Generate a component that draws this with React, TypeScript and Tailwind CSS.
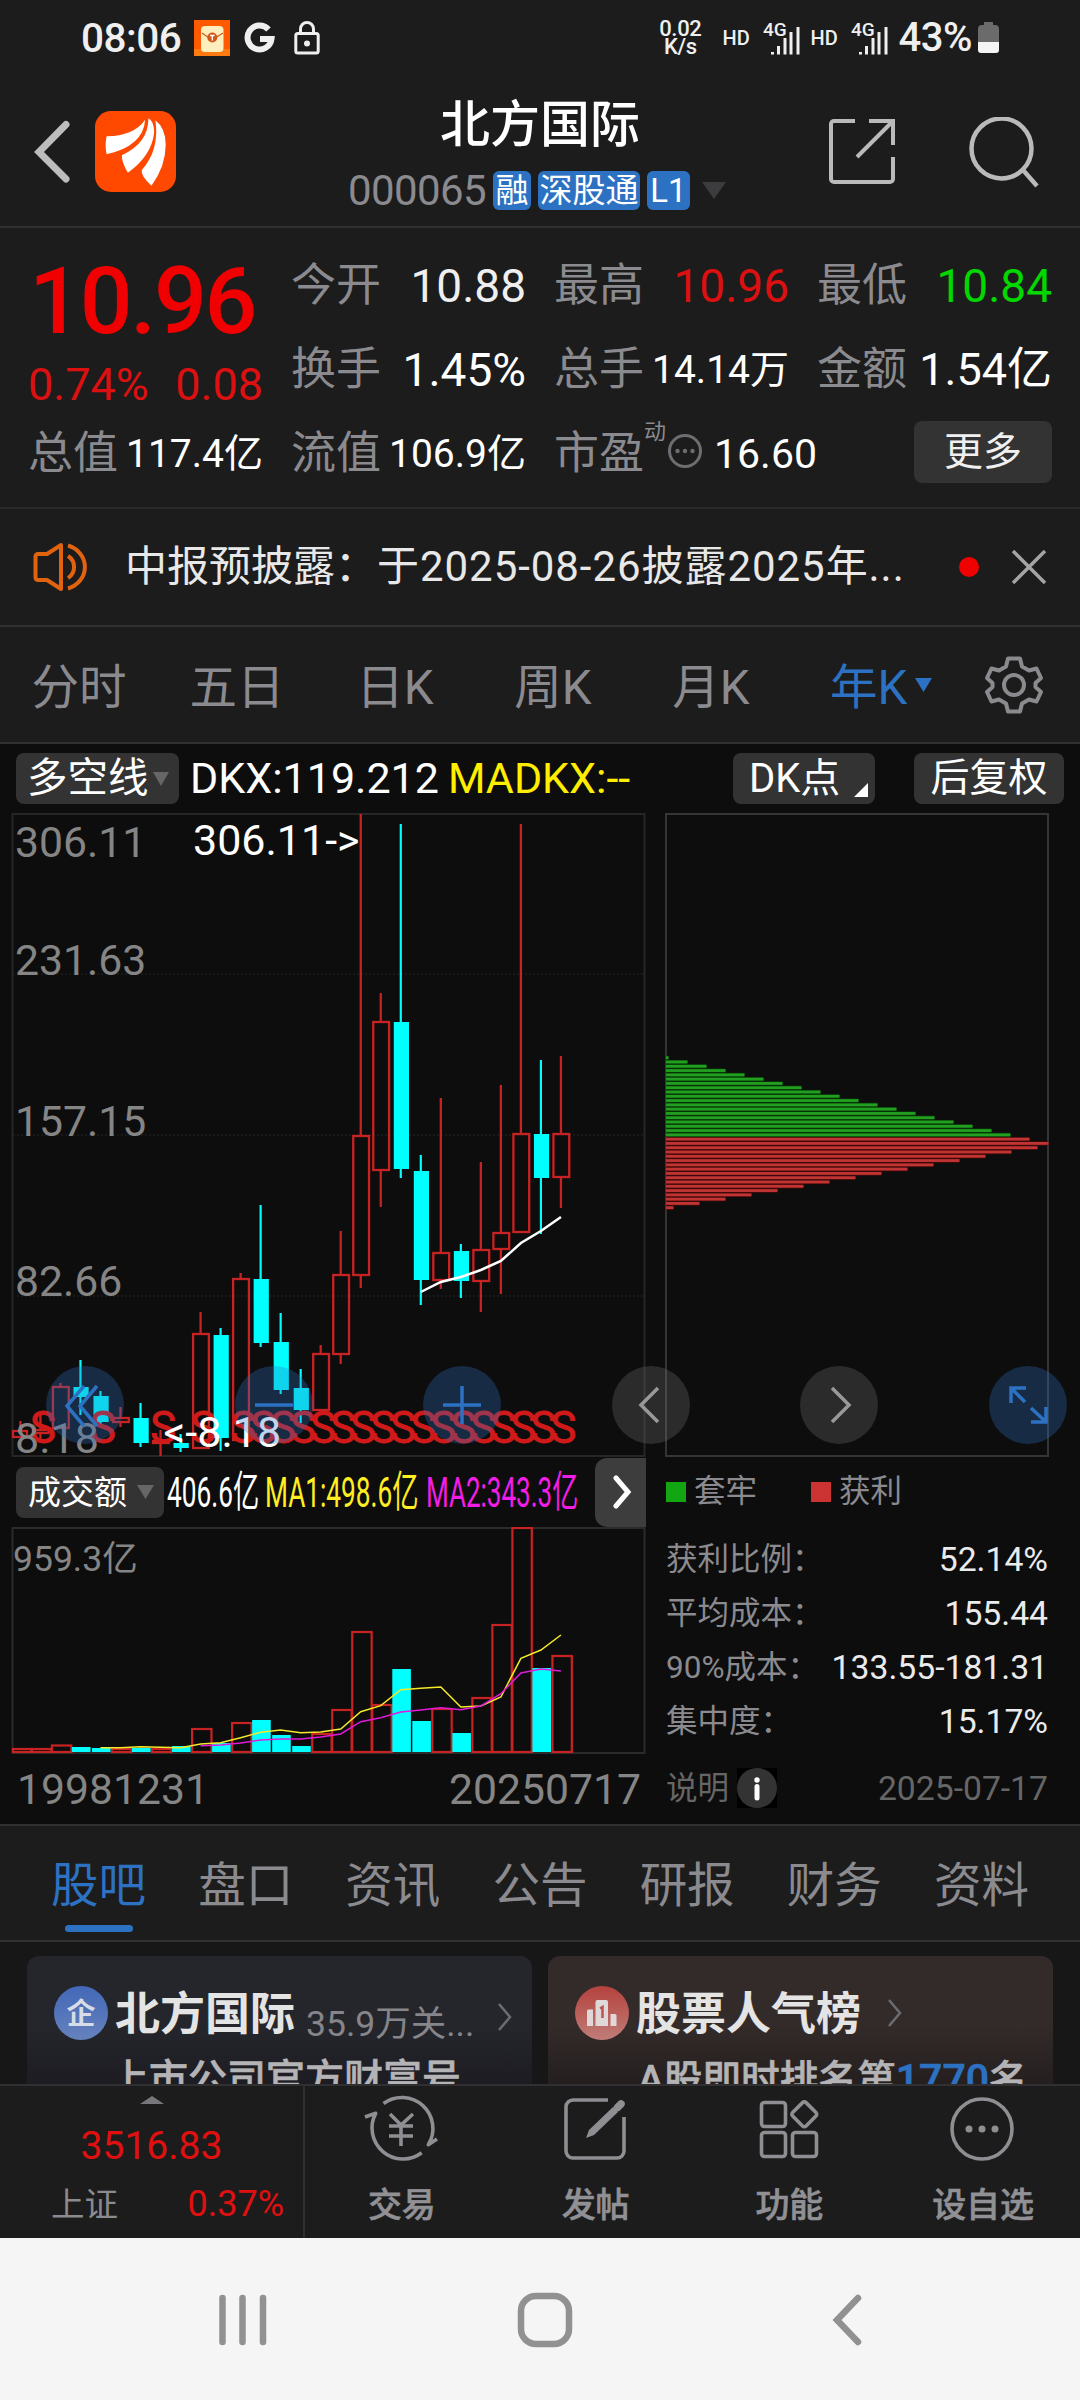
import React from "react";

type Candle = { up: boolean; high: number; top: number; bottom: number; low: number };

const RED = "#c82222";
const CYAN = "#00ffff";
const xAt = (i: number) => 20.4 + 20.02 * i;

const candles: Candle[] = [
  { up: true, high: 1421, top: 1431, bottom: 1437, low: 1437 },
  { up: true, high: 1415, top: 1430, bottom: 1433, low: 1440 },
  { up: true, high: 1383, top: 1387, bottom: 1428, low: 1428 },
  { up: false, high: 1360, top: 1387, bottom: 1397, low: 1415 },
  { up: false, high: 1391, top: 1396, bottom: 1422, low: 1424 },
  { up: true, high: 1407, top: 1418, bottom: 1422, low: 1427 },
  { up: false, high: 1403, top: 1418, bottom: 1443, low: 1447 },
  { up: true, high: 1430, top: 1441, bottom: 1443, low: 1456 },
  { up: false, high: 1434, top: 1443, bottom: 1448, low: 1452 },
  { up: true, high: 1312, top: 1334, bottom: 1448, low: 1448 },
  { up: false, high: 1328, top: 1335, bottom: 1438, low: 1451 },
  { up: true, high: 1273, top: 1279, bottom: 1440, low: 1440 },
  { up: false, high: 1205, top: 1279, bottom: 1343, low: 1347 },
  { up: false, high: 1313, top: 1342, bottom: 1390, low: 1394 },
  { up: false, high: 1369, top: 1388, bottom: 1410, low: 1423 },
  { up: true, high: 1345, top: 1354, bottom: 1410, low: 1410 },
  { up: true, high: 1231, top: 1275, bottom: 1354, low: 1364 },
  { up: true, high: 814, top: 1136, bottom: 1275, low: 1288 },
  { up: true, high: 993, top: 1022, bottom: 1170, low: 1207 },
  { up: false, high: 824, top: 1022, bottom: 1169, low: 1178 },
  { up: false, high: 1155, top: 1171, bottom: 1280, low: 1305 },
  { up: true, high: 1098, top: 1253, bottom: 1280, low: 1289 },
  { up: false, high: 1244, top: 1251, bottom: 1281, low: 1298 },
  { up: true, high: 1162, top: 1250, bottom: 1281, low: 1312 },
  { up: true, high: 1085, top: 1233, bottom: 1249, low: 1294 },
  { up: true, high: 824, top: 1134, bottom: 1232, low: 1232 },
  { up: false, high: 1060, top: 1134, bottom: 1178, low: 1234 },
  { up: true, high: 1056, top: 1134, bottom: 1177, low: 1208 },
];

const signals = [1, 4, 7, 9, 11, 12, 13, 14, 15, 16, 17, 18, 19, 20, 21, 22, 23, 24, 25, 26, 27];
const dkx = [1292, 1282, 1277, 1270, 1261, 1243, 1231, 1217];

const volumeTops = [
  1749, 1749, 1745.5, 1747, 1748, 1749, 1748, 1749, 1746, 1729, 1743, 1723, 1720, 1735, 1746, 1734, 1710, 1632, 1705,
  1669, 1721, 1709, 1733, 1698, 1625, 1528, 1668, 1656,
];
const ma1 = [
  893, 893, 890, 892, 893, 882, 878, 863, 847, 840, 848, 846, 837, 785, 767, 719, 715, 711, 771, 768, 741, 625, 600, 555,
];
const ma2 = [887, 885, 879, 870, 867, 867, 861, 852, 815, 803, 786, 780, 773, 779, 768, 731, 669, 657, 663];

const line = (ys: number[], start: number) => ys.map((y, k) => `${xAt(start + k)},${y}`).join(" ");

function StatusBar() {
  return (
    <div className="flex h-[76px] items-center pl-[81px] pr-[81px] text-[#efefef]">
      <span className="w-[113px] text-[40.500px] font-medium leading-[74px] tracking-[-0.5px]">08:06</span>
      <svg width="36" height="36" viewBox="0 0 36 36">
        <rect width="36" height="36" fill="#ff5a00" />
        <rect y="29" width="36" height="7" fill="#ff7a10" />
        <rect x="7" y="6" width="22.500" height="26" rx="4" fill="#fdeebd" />
        <path d="M8 13L18 20L29 13" fill="none" stroke="#c9601c" strokeWidth="1.200" />
        <circle cx="18.300" cy="17.500" r="5" fill="#d4581a" />
        <path d="M16 15.500H20.600M18.300 15.500V20.500" stroke="#fff" strokeWidth="1.300" />
      </svg>
      <svg className="ml-[14px]" width="31" height="32" viewBox="0 0 31 32">
        <path d="M24.500 7.500A12 12 0 1 0 27.500 17H16" fill="none" stroke="#efefef" strokeWidth="6" />
      </svg>
      <svg className="ml-[19px]" width="26" height="34" viewBox="0 0 26 34">
        <rect x="1.800" y="12.500" width="22.400" height="19.500" rx="2" fill="none" stroke="#efefef" strokeWidth="3" />
        <path d="M6.500 12V8a6.500 6.500 0 0 1 13 0v4" fill="none" stroke="#efefef" strokeWidth="3" />
        <circle cx="13" cy="22.500" r="3" fill="#efefef" />
      </svg>
      <div className="flex-1" />
      <div className="mr-[21px] flex flex-col items-center text-[22px] font-medium leading-[18px] tracking-[-0.3px]">
        <span>0.02</span>
        <span>K/s</span>
      </div>
      <Signal />
      <Signal />
      <span className="text-[40px] font-medium leading-[74px] tracking-[-0.5px]">43%</span>
      <svg className="ml-[6px]" width="21" height="32" viewBox="0 0 21 32">
        <path d="M6 0h9v3h2a4 4 0 0 1 4 4v14H0V7a4 4 0 0 1 4-4h2z" fill="#6b6b6b" />
        <path d="M0 20h21v8a3 3 0 0 1-3 3H3a3 3 0 0 1-3-3z" fill="#f4f4f4" />
      </svg>
    </div>
  );
}

function Signal() {
  return (
    <div className="flex w-[88px] items-center">
      <span className="w-[40px] text-[20px] font-medium leading-[40px]">HD</span>
      <svg className="overflow-visible" width="38" height="36" viewBox="0 0 38 36">
        <text x="0" y="16" fontSize="19" fontWeight="500" fill="#efefef">
          4G
        </text>
        <path d="M9.500 32v2.500M15.500 26v8.500M22 18v16.500M28 12v22.500M35 7v27.500" stroke="#efefef" strokeWidth="3" />
      </svg>
    </div>
  );
}

function Header() {
  return (
    <div className="flex h-[152px] border-b-2 border-[#303032]">
      <div className="flex w-[340px] pl-[33px] pt-[35px]">
        <svg className="mt-[9px]" width="38" height="64" viewBox="0 0 38 64">
          <path d="M33 4.500L6 32L33 59" fill="none" stroke="#bdbdbd" strokeWidth="7" strokeLinecap="round" />
        </svg>
        <svg className="ml-[24px]" width="81" height="81" viewBox="285 333 244 244">
          <rect x="285" y="333" width="244" height="244" rx="48" fill="#ff4800" />
          <path d="M320 409Q402 408 436 359Q431 438 320 463Q314 436 320 409Z" fill="#fff" />
          <path d="M366 466Q446 430 446 355Q464 364 463 400Q455 468 384 519Q365 486 366 466Z" fill="#fff" />
          <path d="M426 511Q480 450 467 361Q498 385 498 435Q498 500 455 558Q422 528 426 511Z" fill="#fff" />
        </svg>
      </div>
      <div className="flex w-[400px] flex-col items-center">
        <div className="h-[88px] text-[50px] font-medium leading-[99px] text-white">北方国际</div>
        <div className="flex w-[380px] items-center gap-[7px] pt-[7px] text-[33px] leading-[39px] text-white">
          <span className="ml-[-2px] w-[138px] text-[42px] tracking-[-0.6px] text-[#8a8a8f]">000065</span>
          <span className="h-[39px] w-[38px] rounded-md bg-[#2d72c2] text-center">融</span>
          <span className="h-[39px] w-[102px] rounded-md bg-[#2d72c2] text-center">深股通</span>
          <span className="h-[39px] w-[43px] rounded-md bg-[#2d72c2] text-center">L1</span>
          <svg className="ml-[5px]" width="24" height="17" viewBox="0 0 24 17">
            <path d="M0 0H24L12 17Z" fill="#3c3c3e" />
          </svg>
        </div>
      </div>
      <div className="flex w-[340px] justify-end pr-[40px] pt-[41px]">
        <svg width="68" height="70" viewBox="0 0 68 70" fill="none" stroke="#bababa" strokeWidth="4">
          <path d="M27 4H6a3 3 0 0 0-3 3V62a3 3 0 0 0 3 3H62a3 3 0 0 0 3-3V40" />
          <path d="M41 4H65V28M65 4L29 40" />
        </svg>
        <svg className="ml-[72px]" width="72" height="72" viewBox="0 0 72 72" fill="none" stroke="#bababa" strokeWidth="4.500">
          <circle cx="33.500" cy="31.500" r="30" />
          <path d="M55 53L69 69" />
        </svg>
      </div>
    </div>
  );
}

function Stat({ label, value, size, color = "text-white" }: { label: string; value: string; size: string; color?: string }) {
  return (
    <div className="flex h-[84px] items-center justify-between whitespace-nowrap leading-[86px]">
      <span className="text-[45px] text-[#8a8a8f]">{label}</span>
      <span className={`${size} ${color}`}>{value}</span>
    </div>
  );
}

function Quote() {
  return (
    <div className="grid h-[281px] grid-cols-4 grid-rows-[84px_84px_84px] gap-x-7 border-b-2 border-[#29292a] px-7 pt-4">
      <div className="row-span-2 whitespace-nowrap">
        <div className="pl-[1px] text-[93px] font-medium leading-[116px] tracking-[-2.2px] text-[#f00000]">10.96</div>
        <div className="flex justify-between text-[45px] leading-[50px] text-[#dc1010]">
          <span>0.74%</span>
          <span>0.08</span>
        </div>
      </div>
      <Stat label="今开" value="10.88" size="text-[46px]" color="text-[#efefef]" />
      <Stat label="最高" value="10.96" size="text-[46px]" color="text-[#dc1010]" />
      <Stat label="最低" value="10.84" size="text-[46px]" color="text-[#00d800]" />
      <Stat label="换手" value="1.45%" size="text-[46px]" />
      <Stat label="总手" value="14.14万" size="text-[39px]" />
      <Stat label="金额" value="1.54亿" size="text-[45px]" />
      <Stat label="总值" value="117.4亿" size="text-[39px]" />
      <Stat label="流值" value="106.9亿" size="text-[39px]" />
      <div className="flex h-[84px] items-center whitespace-nowrap leading-[86px]">
        <span className="text-[45px] text-[#8a8a8f]">市盈</span>
        <span className="h-[84px] text-[22px] leading-[40px] text-[#8a8a8f]">动</span>
        <svg className="ml-[1px] mt-[-6px] shrink-0" width="36" height="36" viewBox="0 0 36 36">
          <circle cx="18" cy="18" r="15.500" fill="none" stroke="#6e6e72" strokeWidth="3" />
          <g fill="#6e6e72">
            <circle cx="10.500" cy="18" r="2.200" />
            <circle cx="18" cy="18" r="2.200" />
            <circle cx="25.500" cy="18" r="2.200" />
          </g>
        </svg>
        <span className="ml-[11px] text-[41px] text-white">16.60</span>
      </div>
      <div className="flex h-[80px] items-center justify-end">
        <span className="h-[62px] w-[138px] rounded-lg bg-[#333333] text-center text-[39px] leading-[62px] text-[#f0f0f0]">更多</span>
      </div>
    </div>
  );
}

function Notice() {
  return (
    <div className="flex h-[118px] items-center border-b-2 border-[#303032] pl-[33px] pr-[33px]">
      <svg width="60" height="50" viewBox="0 0 60 50" fill="none" stroke="#e2630f" strokeWidth="4">
        <path d="M28 3V47L14 38H5a2.500 2.500 0 0 1-2.500-2.500V14.500A2.500 2.500 0 0 1 5 12H14Z" strokeLinejoin="round" />
        <path d="M35 14A13 13 0 0 1 35 36M35 3.500A24 22.500 0 0 1 35 46.500" />
      </svg>
      <span className="ml-[32px] flex-1 whitespace-nowrap text-[42px] leading-[116px] text-[#e8e8e8]">
        中报预披露：<span className="tracking-[0.95px]">于2025-08-26披露2025年...</span>
      </span>
      <span className="h-5 w-5 rounded-full bg-[#f00000]" />
      <svg className="ml-[32px]" width="36" height="34" viewBox="0 0 36 34">
        <path d="M2 1L34 33M34 1L2 33" stroke="#a4a4a4" strokeWidth="3.500" />
      </svg>
    </div>
  );
}

function PeriodTabs() {
  return (
    <div className="flex h-[117px] items-center border-b-2 border-[#303032] text-[47.500px] leading-[115px] text-[#8a8a8f]">
      {["分时", "五日", "日K", "周K", "月K"].map((t) => (
        <span key={t} className="mt-[7px] w-[158px] text-center">
          {t}
        </span>
      ))}
      <span className="mt-[7px] flex w-[158px] items-center pl-[40px] text-[#2d72c2]">
        年K
        <svg className="ml-[8px] mt-[-6px]" width="17" height="14" viewBox="0 0 17 14">
          <path d="M0 0H17L8.500 14Z" fill="#2d72c2" />
        </svg>
      </span>
      <svg className="ml-[36px]" width="60" height="60" viewBox="0 0 60 60" fill="none" stroke="#8a8a8f" strokeWidth="4">
        <path
          d="M24 3.500H36L38 11.500L45 15.500L52.500 13.500L57 23L51.500 28V32L57 37L52.500 46.500L45 44.500L38 48.500L36 56.500H24L22 48.500L15 44.500L7.500 46.500L3 37L8.500 32V28L3 23L7.500 13.500L15 15.500L22 11.500Z"
          strokeLinejoin="round"
        />
        <circle cx="30" cy="30" r="10" />
      </svg>
    </div>
  );
}

function IndicatorBar() {
  return (
    <div className="flex h-[69px] items-center px-4 text-[39px] leading-[51px] text-white">
      <div className="flex h-[51px] w-[163px] items-center rounded-lg bg-[#333333] pl-[11px]">
        <span className="text-[40.500px]">多空线</span>
        <svg className="ml-[4px]" width="16" height="14" viewBox="0 0 16 14">
          <path d="M0 0H16L8 14Z" fill="#666" />
        </svg>
      </div>
      <span className="ml-[11px] text-[43px]">DKX:119.212</span>
      <span className="ml-[9px] text-[43px] text-[#ffee00]">MADKX:--</span>
      <div className="flex-1" />
      <div className="flex h-[51px] w-[142px] rounded-lg bg-[#333333] pl-[16px]">
        <span className="w-[105px] text-[40px]">DK点</span>
        <svg className="mt-[30px]" width="14" height="14" viewBox="0 0 14 14">
          <path d="M14 0V14H0Z" fill="#fff" />
        </svg>
      </div>
      <div className="ml-[39px] h-[51px] w-[150px] rounded-lg bg-[#333333] text-center">后复权</div>
    </div>
  );
}

function PriceChart() {
  return (
    <svg className="block" width="650" height="644" viewBox="0 813 650 644">
      <rect x="12.500" y="814" width="632" height="642" fill="none" stroke="#262626" strokeWidth="2" />
      {[974, 1135, 1296].map((y) => (
        <line key={y} x1="13" x2="645" y1={y} y2={y} stroke="#1e1e1e" strokeWidth="1.500" strokeDasharray="2 2" />
      ))}
      <g fontSize="42.700" fill="#858585">
        <text x="15" y="856.500">306.11</text>
        <text x="15" y="974.500">231.63</text>
        <text x="15" y="1136">157.15</text>
        <text x="15" y="1296">82.66</text>
      </g>
      {candles.map((c, i) => {
        const x = xAt(i);
        return c.up ? (
          <g key={i} stroke={RED} strokeWidth="2.300" fill="none">
            <path d={`M${x} ${c.high}V${c.top}M${x} ${c.bottom}V${c.low}`} />
            <rect x={Math.max(x - 7.5, 13)} y={c.top} width={i === 0 ? 14 : 15.8} height={c.bottom - c.top} />
          </g>
        ) : (
          <g key={i}>
            <line x1={x} x2={x} y1={c.high} y2={c.low} stroke={CYAN} strokeWidth="2.200" />
            <rect x={x - 7} width="15.200" y={c.top} height={c.bottom - c.top} fill={CYAN} />
          </g>
        );
      })}
      <polyline points={line(dkx, 20)} fill="none" stroke="#fff" strokeWidth="2.500" />
      <g fontSize="43.500" fill="#d01a1a" stroke="#d01a1a" strokeWidth="0.900" textAnchor="middle">
        {signals.map((i) => (
          <text key={i} x={xAt(i) + 2.5} y="1442.500">
            S
          </text>
        ))}
      </g>
      <g fontSize="43">
        <text x="15" y="1453" fill="#858585">8.18</text>
        <text x="193" y="855" fill="#fff">306.11-&gt;</text>
        <text x="163.500" y="1447" fill="#fff">&lt;-8.18</text>
      </g>
    </svg>
  );
}

function ChipChart() {
  return (
    <svg className="block" width="430" height="644" viewBox="650 813 430 644">
      <rect x="666" y="814" width="382" height="642" fill="none" stroke="#353535" strokeWidth="2" />
      {Array.from({ length: 36 }, (_, i) => {
        const green = i < 19;
        const width = i <= 20 ? 2.5 + 19 * i : 371.5 - 26 * (i - 21);
        const y = 1057.7 + 4.286 * i;
        return (
          <g key={i}>
            <rect x="666" y={y - 2.1} width={width} height="4.286" fill={green ? "#073d07" : "#4a0a0a"} />
            <rect x="666" y={y - 1.4} width={width} height="2.800" fill={green ? "#229e20" : "#c03434"} />
          </g>
        );
      })}
    </svg>
  );
}

function RoundButton({ blue, children }: { blue?: boolean; children: React.ReactNode }) {
  return (
    <div className={`flex h-[78px] w-[78px] items-center justify-center rounded-full ${blue ? "bg-[#2d72c2]/30" : "bg-[#717171]/30"}`}>
      <svg width="50" height="50" viewBox="-25 -25 50 50" fill="none" stroke={blue ? "#2d72c2" : "#999999"} strokeWidth="3.500">
        {children}
      </svg>
    </div>
  );
}

function ChartControls() {
  return (
    <div className="absolute bottom-[13px] left-[46px] right-[13px] flex justify-between">
      <RoundButton blue>
        <path d="M-1 -19L-18 1L-1 21M12 -19L-5 1L12 21" />
      </RoundButton>
      <RoundButton blue>
        <path d="M-19 0H19" />
      </RoundButton>
      <RoundButton blue>
        <path d="M-19 0H19M0 -19V19" />
      </RoundButton>
      <RoundButton>
        <path d="M7 -17L-10 0L7 17" />
      </RoundButton>
      <RoundButton>
        <path d="M-7 -17L10 0L-7 17" />
      </RoundButton>
      <RoundButton blue>
        <path d="M-2 -17H-17V-2M-17 -17L-3 -3M18 2V17H3M18 17L3 3" />
      </RoundButton>
    </div>
  );
}

function VolumeBar() {
  return (
    <div className="flex h-[70px] items-center pl-4 text-[43px] leading-[60px]">
      <div className="flex h-[51px] w-[148px] shrink-0 items-center rounded-lg bg-[#333333] pl-[12px]">
        <span className="text-[33px] leading-[51px] text-white">成交额</span>
        <svg className="ml-[10px]" width="17" height="14" viewBox="0 0 17 14">
          <path d="M0 0H17L8.500 14Z" fill="#666" />
        </svg>
      </div>
      <span className="ml-[3px] w-[98px] origin-left scale-x-[0.610] whitespace-nowrap text-white">406.6亿</span>
      <span className="w-[161px] origin-left scale-x-[0.610] whitespace-nowrap text-[#ffee22]">MA1:498.6亿</span>
      <span className="w-[169px] origin-left scale-x-[0.605] whitespace-nowrap text-[#f31de8]">MA2:343.3亿</span>
      <div className="relative flex h-[69px] w-[51px] items-center rounded-l-xl bg-[#3d3d3d] pl-[17px]">
        <svg width="22" height="34" viewBox="0 0 22 34">
          <path d="M4 3L16 17L4 31" fill="none" stroke="#fff" strokeWidth="5" strokeLinecap="round" />
        </svg>
      </div>
    </div>
  );
}

function VolumeChart() {
  return (
    <svg className="block" width="650" height="227" viewBox="0 1527 650 227">
      <rect x="12.500" y="1528" width="632" height="225" fill="none" stroke="#2b2b2b" strokeWidth="2" />
      <text x="13" y="1571" fontSize="35.500" fill="#858585">
        959.3亿
      </text>
      {volumeTops.map((top, i) => {
        const x = xAt(i);
        return candles[i].up ? (
          <rect key={i} x={Math.max(x - 8.5, 13)} y={top} width={i === 0 ? 18.5 : 19.4} height={1752 - top} fill="none" stroke={RED} strokeWidth="2.200" />
        ) : (
          <rect key={i} x={x - 8.5} y={top} width="18.600" height={1752 - top} fill={CYAN} />
        );
      })}
      <polyline points={line(ma1.map((v) => 1450 + v / 3), 4)} fill="none" stroke="#f5ea2a" strokeWidth="1.500" />
      <polyline points={line(ma2.map((v) => 1450 + v / 3), 9)} fill="none" stroke="#e01ad8" strokeWidth="1.500" />
    </svg>
  );
}

const chipStats = [
  ["获利比例：", "52.14%"],
  ["平均成本：", "155.44"],
  ["90%成本：", "133.55-181.31"],
  ["集中度：", "15.17%"],
];

function ChipPanel() {
  return (
    <div className="w-[430px] pl-[16px] pr-[32px] text-[31.500px] text-[#8a8a8f]">
      <div className="flex h-[70px] items-center leading-[70px]">
        <span className="h-5 w-5 bg-[#13a613]" />
        <span className="ml-[8px] w-[117px]">套牢</span>
        <span className="h-5 w-5 bg-[#cc3333]" />
        <span className="ml-[8px]">获利</span>
      </div>
      <div className="pt-[6px]">
        {chipStats.map(([label, value]) => (
          <div key={label} className="flex h-[54px] items-center justify-between whitespace-nowrap leading-[54px]">
            <span>{label}</span>
            <span className="text-[33.700px] text-[#ebebeb]">{value}</span>
          </div>
        ))}
      </div>
      <div className="mt-[18px] flex h-[42px] items-center leading-[43px] text-[#666666]">
        <span className="w-[71px]">说明</span>
        <span className="flex h-10 w-10 bg-black">
          <svg width="40" height="40" viewBox="0 0 40 40">
            <circle cx="20" cy="20" r="20" fill="#333" />
            <circle cx="20" cy="12" r="2.700" fill="#fff" />
            <path d="M20 18.500V30" stroke="#fff" strokeWidth="5" strokeLinecap="round" />
          </svg>
        </span>
        <span className="flex-1 text-right text-[33.700px]">2025-07-17</span>
      </div>
    </div>
  );
}

function ChartArea() {
  return (
    <div className="h-[1080px] bg-[#0d0d0d]">
      <IndicatorBar />
      <div className="relative flex">
        <PriceChart />
        <ChipChart />
        <ChartControls />
      </div>
      <div className="flex">
        <div className="w-[650px]">
          <VolumeBar />
          <VolumeChart />
          <div className="flex justify-between pl-[17px] pr-[9px] pt-[6px] text-[42.700px] leading-[59px] text-[#858585]">
            <span>19981231</span>
            <span>20250717</span>
          </div>
        </div>
        <ChipPanel />
      </div>
    </div>
  );
}

function SectionTabs() {
  return (
    <div className="flex h-[118px] border-y-2 border-[#303032] px-[25px] text-[47.500px] leading-[121px] text-[#8a8a8f]">
      {["股吧", "盘口", "资讯", "公告", "研报", "财务", "资料"].map((t, i) => (
        <div key={t} className={`relative flex-1 text-center ${i === 0 ? "text-[#2d72c2]" : ""}`}>
          {t}
          {i === 0 && <span className="absolute bottom-[8px] left-[40px] h-[7px] w-[68px] rounded-full bg-[#2d72c2]" />}
        </div>
      ))}
    </div>
  );
}

function Chevron() {
  return (
    <svg width="16" height="28" viewBox="0 0 16 28">
      <path d="M2 1L13 14L2 27" fill="none" stroke="#6c6c70" strokeWidth="2.500" />
    </svg>
  );
}

function Cards() {
  return (
    <div className="flex h-[142px] gap-4 overflow-hidden bg-[#171717] px-[27px] pt-[14px]">
      <div className="h-[200px] flex-1 rounded-xl bg-gradient-to-b from-[#25262c] from-35% to-[#1c1c22] to-65% pl-[27px] pt-[15px]">
        <div className="flex h-[84px] items-center whitespace-nowrap leading-[84px]">
          <svg width="54" height="54" viewBox="0 0 54 54">
            <defs>
              <linearGradient id="blueDisc" x1="0" y1="0" x2="0" y2="1">
                <stop offset="0" stopColor="#4468b8" />
                <stop offset="1" stopColor="#6582bd" />
              </linearGradient>
            </defs>
            <circle cx="27" cy="27" r="27" fill="url(#blueDisc)" />
            <text x="27" y="37.500" fontSize="29" fontWeight="700" fill="#d8dce6" textAnchor="middle">
              企
            </text>
          </svg>
          <span className="ml-[7px] mt-[4px] text-[45px] font-bold text-[#e4e4e4]">北方国际</span>
          <span className="ml-[11px] mt-[21px] text-[35.500px] text-[#85858a]">35.9万关...</span>
          <span className="ml-[23px] mt-[7px] flex">
            <Chevron />
          </span>
        </div>
        <div className="whitespace-nowrap pl-[56px] text-[39px] font-medium leading-[48px] text-[#b4b4b6] [-webkit-text-stroke:0.600px_#b4b4b6]">
          上市公司官方财富号
        </div>
      </div>
      <div className="h-[200px] flex-1 rounded-xl bg-gradient-to-b from-[#332b2a] from-35% to-[#241e1e] to-65% pl-[27px] pt-[15px]">
        <div className="flex h-[84px] items-center whitespace-nowrap leading-[84px]">
          <svg width="54" height="54" viewBox="0 0 54 54">
            <defs>
              <linearGradient id="redDisc" x1="0" y1="0" x2="0" y2="1">
                <stop offset="0" stopColor="#b4423d" />
                <stop offset="1" stopColor="#c07c78" />
              </linearGradient>
            </defs>
            <circle cx="27" cy="27" r="27" fill="url(#redDisc)" />
            <path d="M12 25a1.500 1.500 0 0 1 1.500-1.500H18V40H12ZM20.500 16a2 2 0 0 1 2-2H31a2 2 0 0 1 2 2V40H20.500ZM35.500 28H40a1.500 1.500 0 0 1 1.500 1.500V40H35.500Z" fill="#e0d8d8" />
            <path d="M25 22.500L27.500 21V32" fill="none" stroke="#b9544f" strokeWidth="2.500" />
          </svg>
          <span className="ml-[7px] mt-[4px] text-[45px] font-bold text-[#e4e4e4]">股票人气榜</span>
          <span className="ml-[26px] flex">
            <Chevron />
          </span>
        </div>
        <div className="whitespace-nowrap pl-[63px] text-[38.700px] font-medium leading-[48px] text-[#b4b4b6] [-webkit-text-stroke:0.600px]">
          A股即时排名第<span className="text-[41px] text-[#2d72c2]">1770</span>名
        </div>
      </div>
    </div>
  );
}

function Action({ label, children }: { label: string; children: React.ReactNode }) {
  return (
    <div className="flex flex-1 flex-col items-center">
      <svg className="mt-[8px] overflow-visible" width="76" height="70" viewBox="-38 -35 76 70" fill="none" stroke="#8e8e93" strokeWidth="3.600">
        {children}
      </svg>
      <span className="mt-[16px] text-[34px] font-medium leading-[51px] text-[#909095] [-webkit-text-stroke:0.600px_#909095]">{label}</span>
    </div>
  );
}

function BottomBar() {
  return (
    <div className="flex h-[154px] border-t-2 border-[#303032]">
      <div className="w-[305px] border-r-2 border-[#303032] text-[#e01010]">
        <svg className="ml-[140px] mt-[10px] block" width="24" height="8" viewBox="0 0 24 8">
          <path d="M0 8L12 0L24 8Z" fill="#77777b" />
        </svg>
        <div className="mt-[12px] text-center text-[39px] leading-[60px]">3516.83</div>
        <div className="flex justify-between pl-[51px] pr-[19px] text-[36px] leading-[57px]">
          <span className="text-[33.500px] text-[#8a8a8f]">上证</span>
          <span>0.37%</span>
        </div>
      </div>
      <Action label="交易">
        <path d="M-18.500 -25.500A31 31 0 0 1 26.300 15.700L35 10" strokeLinejoin="round" />
        <path d="M-37 -12L-26.300 -15.700A31 31 0 0 0 19.700 23.700" strokeLinejoin="round" />
        <path d="M-12 -15L-1 -4L11 -15M-13 -3H11M-13 7H11M-1 -4V17" />
      </Action>
      <Action label="发帖">
        <path d="M12 -29H-23a7 7 0 0 0-7 7V22a7 7 0 0 0 7 7H21a7 7 0 0 0 7-7V-12" />
        <path d="M-10 9L-7 1L17 -22L22 -17L-2 6Z" fill="#8e8e93" stroke="none" />
        <path d="M21.500 -21.500L25 -25" strokeWidth="7.500" strokeLinecap="round" />
      </Action>
      <Action label="功能">
        <rect x="-27.500" y="-26.500" width="24" height="24" rx="3" />
        <rect x="-27.500" y="3.500" width="24" height="24" rx="3" />
        <rect x="3.500" y="3.500" width="24" height="24" rx="3" />
        <rect x="5.800" y="-24.200" width="19" height="19" rx="2.500" transform="rotate(45 15.300 -14.700)" />
      </Action>
      <Action label="设自选">
        <circle cx="-1" cy="0" r="30" />
        <g fill="#8e8e93" stroke="none">
          <circle cx="-14" cy="0" r="3.500" />
          <circle cx="-1" cy="0" r="3.500" />
          <circle cx="12" cy="0" r="3.500" />
        </g>
      </Action>
    </div>
  );
}

function NavBar() {
  return (
    <div className="flex h-[162px] items-center bg-[#f5f5f5] pl-[214px] pt-[2px]">
      <svg width="58" height="58" viewBox="0 0 58 58">
        <path d="M8.500 7V51M28.500 7V51M49 7V51" stroke="#919191" strokeWidth="6.500" strokeLinecap="round" />
      </svg>
      <svg className="ml-[244px]" width="58" height="58" viewBox="0 0 58 58">
        <rect x="5" y="5" width="48" height="48" rx="15" fill="none" stroke="#919191" strokeWidth="6.500" />
      </svg>
      <svg className="ml-[255px]" width="38" height="58" viewBox="0 0 38 58">
        <path d="M29 7L8 29L29 51" fill="none" stroke="#919191" strokeWidth="6.500" strokeLinecap="round" />
      </svg>
    </div>
  );
}

export default function App() {
  return (
    <div className="flex h-[2400px] w-[1080px] flex-col overflow-hidden bg-[#1c1c1c] font-['Roboto','Noto_Sans_CJK_SC',sans-serif]">
      <StatusBar />
      <Header />
      <Quote />
      <Notice />
      <PeriodTabs />
      <ChartArea />
      <SectionTabs />
      <Cards />
      <BottomBar />
      <NavBar />
    </div>
  );
}
